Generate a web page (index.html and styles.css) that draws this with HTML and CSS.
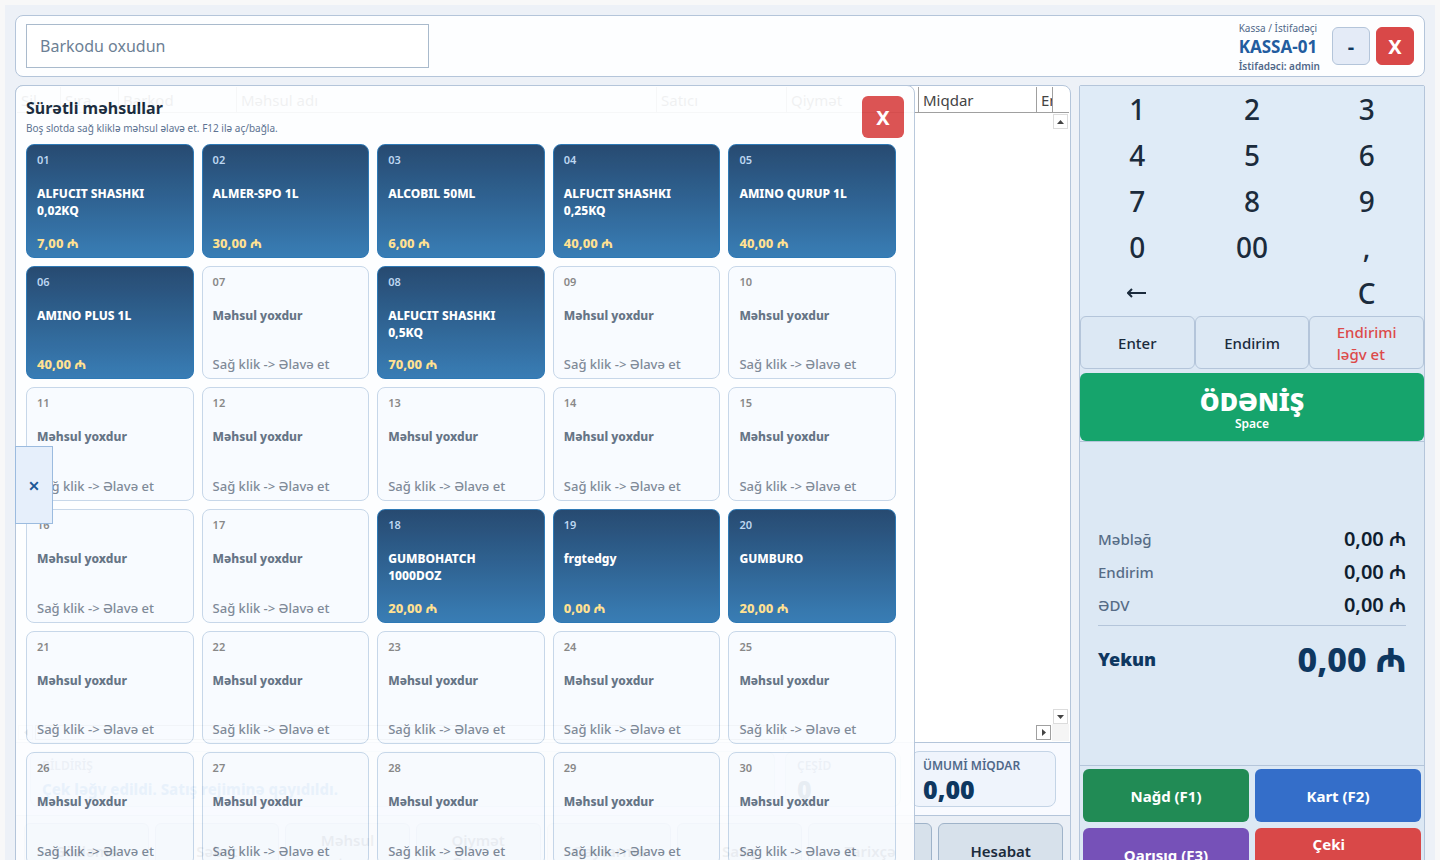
FILE: index.html
```html
<!DOCTYPE html>
<html lang="az">
<head>
    <meta charset="UTF-8">
    <meta name="viewport" content="width=device-width, initial-scale=1.0">
    <title>Kassa</title>
    <link rel="stylesheet" href="styles.css">
</head>
<body>
    <div class="app">
        <header class="topbar">
            <input type="text" class="barcode" placeholder="Barkodu oxudun" aria-label="Barkodu oxudun">
            <div class="cashier">
                <span class="cashier-label">Kassa / İstifadəçi</span>
                <strong class="cashier-name">KASSA-01</strong>
                <span class="cashier-user">İstifadəci: admin</span>
            </div>
            <button type="button" class="win-btn">-</button>
            <button type="button" class="win-btn win-close">X</button>
        </header>

        <main class="content">
            <section class="sales">
                <div class="sales-list">
                    <div class="table-wrap">
                        <table>
                            <colgroup>
                                <col class="c-del"><col class="c-no"><col class="c-code"><col class="c-name">
                                <col class="c-seller"><col class="c-price"><col class="c-qty"><col class="c-disc">
                            </colgroup>
                            <thead>
                                <tr>
                                    <th>Sil</th>
                                    <th>Sıra</th>
                                    <th>Barkod</th>
                                    <th>Məhsul adı</th>
                                    <th>Satıcı</th>
                                    <th>Qiymət</th>
                                    <th>Miqdar</th>
                                    <th>Endirim</th>
                                </tr>
                            </thead>
                            <tbody></tbody>
                        </table>
                    </div>
                    <div class="scroll-y">
                        <button type="button" class="arrow" aria-label="Yuxarı"><svg viewBox="0 0 7 4"><path d="M0 4L3.5 0L7 4Z"/></svg></button>
                        <button type="button" class="arrow" aria-label="Aşağı"><svg viewBox="0 0 7 4"><path d="M0 0L3.5 4L7 0Z"/></svg></button>
                    </div>
                    <div class="scroll-x">
                        <button type="button" class="arrow" aria-label="Sola"><svg class="side" viewBox="0 0 4 7"><path d="M4 0L0 3.5L4 7Z"/></svg></button>
                        <div class="track"><div class="thumb"></div></div>
                        <button type="button" class="arrow dark" aria-label="Sağa"><svg class="side" viewBox="0 0 4 7"><path d="M0 0L4 3.5L0 7Z"/></svg></button>
                    </div>
                    <div class="scroll-corner"></div>
                </div>

                <div class="stats">
                    <div class="stat">
                        <span class="stat-label">BİLDİRİŞ</span>
                        <span class="stat-note">Çek ləğv edildi. Satış rejiminə qayıdıldı.</span>
                    </div>
                    <div class="stat">
                        <span class="stat-label">ÇEŞİD</span>
                        <span class="stat-value">0</span>
                    </div>
                    <div class="stat">
                        <span class="stat-label">ÜMUMİ MİQDAR</span>
                        <span class="stat-value">0,00</span>
                    </div>
                </div>

                <nav class="actions">
                    <button type="button"><span>Gözləmə</span></button>
                    <button type="button"><span>Səbət</span></button>
                    <button type="button"><span>Məhsul<br>axtar</span></button>
                    <button type="button"><span>Qiymət<br>Öyrən</span></button>
                    <button type="button"><span>Qaytarma</span></button>
                    <button type="button"><span>Satış</span></button>
                    <button type="button"><span>Tarixçə</span></button>
                    <button type="button"><span>Hesabat</span></button>
                </nav>

                <div class="quick">
                    <div class="quick-head">
                        <div>
                            <h2>Sürətli məhsullar</h2>
                            <p>Boş slotda sağ kliklə məhsul əlavə et. F12 ilə aç/bağla.</p>
                        </div>
                        <button type="button" class="quick-close">X</button>
                    </div>
                    <div class="quick-grid" id="slots"></div>
                </div>
                <button type="button" class="quick-tab">×</button>
            </section>

            <aside class="side-panel">
                <div class="keypad">
                    <button type="button">1</button>
                    <button type="button">2</button>
                    <button type="button">3</button>
                    <button type="button">4</button>
                    <button type="button">5</button>
                    <button type="button">6</button>
                    <button type="button">7</button>
                    <button type="button">8</button>
                    <button type="button">9</button>
                    <button type="button">0</button>
                    <button type="button">00</button>
                    <button type="button">,</button>
                    <button type="button" class="key-back" aria-label="Geri">
                        <svg viewBox="0 0 20 10"><path d="M19 5H2M5 1L1 5L5 9"/></svg>
                    </button>
                    <button type="button" class="key-clear">C</button>
                </div>
                <div class="commands">
                    <button type="button">Enter</button>
                    <button type="button">Endirim</button>
                    <button type="button" class="cancel"><span>Endirimi<br>ləğv et</span></button>
                </div>
                <button type="button" class="pay">
                    <span class="pay-title">ÖDƏNİŞ</span>
                    <span class="pay-key">Space</span>
                </button>
                <dl class="totals">
                    <div><dt>Məbləğ</dt><dd>0,00 ₼</dd></div>
                    <div><dt>Endirim</dt><dd>0,00 ₼</dd></div>
                    <div><dt>ƏDV</dt><dd>0,00 ₼</dd></div>
                    <div class="grand"><dt>Yekun</dt><dd>0,00 ₼</dd></div>
                </dl>
                <div class="methods">
                    <button type="button" class="cash">Nağd (F1)</button>
                    <button type="button" class="card">Kart (F2)</button>
                    <button type="button" class="mixed">Qarışıq (F3)</button>
                    <button type="button" class="void"><span>Çeki<br>ləğv et</span></button>
                </div>
            </aside>
        </main>
    </div>

    <script>
        const slots = document.getElementById("slots");
        const products = {
            1: ["ALFUCIT SHASHKI 0,02KQ", "7,00 ₼"],
            2: ["ALMER-SPO 1L", "30,00 ₼"],
            3: ["ALCOBIL 50ML", "6,00 ₼"],
            4: ["ALFUCIT SHASHKI 0,25KQ", "40,00 ₼"],
            5: ["AMINO QURUP 1L", "40,00 ₼"],
            6: ["AMINO PLUS 1L", "40,00 ₼"],
            8: ["ALFUCIT SHASHKI 0,5KQ", "70,00 ₼"],
            18: ["GUMBOHATCH 1000DOZ", "20,00 ₼"],
            19: ["frgtedgy", "0,00 ₼"],
            20: ["GUMBURO", "20,00 ₼"]
        };

        for (let i = 1; i <= 30; i++) {
            const product = products[i];
            const [name, price] = product || ["Məhsul yoxdur", "Sağ klik -> Əlavə et"];
            const button = document.createElement("button");
            button.type = "button";
            button.className = product ? "slot filled" : "slot";
            [["slot-no", String(i).padStart(2, "0")], ["slot-name", name], ["slot-price", price]].forEach(([cls, text]) => {
                const span = document.createElement("span");
                span.className = cls;
                span.textContent = text;
                button.appendChild(span);
            });
            slots.appendChild(button);
        }
    </script>
</body>
</html>
```

FILE: styles.css
```css
* {
    box-sizing: border-box;
}

html,
body {
    height: 100%;
    overflow: hidden;
}

body {
    margin: 0;
    background-color: #f8f8f8;
    font-family: "Noto Sans", "Open Sans", sans-serif;
    color: #1b2b3c;
}

button,
input {
    font-family: inherit;
    color: inherit;
}

button {
    padding: 0;
    border: 0;
    background: none;
    cursor: pointer;
}

.app {
    display: flex;
    flex-direction: column;
    gap: 8px;
    height: calc(100vh + 40px);
    border: 5px solid #f8f8f8;
    padding: 10px;
    background-color: #edf1f7;
}

/* Top bar */
.topbar {
    display: flex;
    align-items: center;
    height: 62px;
    padding: 0 10px;
    border: 1px solid #b4c5da;
    border-radius: 8px;
    background-color: #fdfeff;
}

.barcode {
    width: 403px;
    height: 44px;
    padding: 0 13px;
    border: 1px solid #a9bacc;
    background-color: #fff;
    font-size: 16px;
}

.barcode::placeholder {
    color: #6c8094;
    opacity: 1;
}

.cashier {
    display: flex;
    flex-direction: column;
    margin-left: auto;
    margin-right: 12px;
    padding-top: 2px;
    font-size: 10px;
    line-height: 16px;
    color: #51698a;
}

.cashier-name {
    font-size: 17px;
    line-height: 22px;
    color: #225c9f;
}

.cashier-user {
    font-weight: 600;
}

.win-btn {
    width: 38px;
    height: 38px;
    border: 1px solid #b4c5da;
    border-radius: 6px;
    background-color: #e4ebf7;
    font-size: 20px;
    font-weight: 700;
    color: #12385f;
}

.win-close {
    margin-left: 6px;
    border-color: #d94848;
    background-color: #d94848;
    color: #fff;
}

/* Sales list */
.content {
    display: flex;
    flex: 1;
    gap: 8px;
    min-height: 0;
}

.sales {
    position: relative;
    display: flex;
    flex: 1;
    flex-direction: column;
    min-width: 0;
    border: 1px solid #b4c5da;
    border-radius: 8px;
    background-color: #fff;
}

.sales-list {
    display: grid;
    flex: 1;
    grid-template-columns: 1fr 17px;
    grid-template-rows: 1fr 17px;
    min-height: 0;
    padding: 1px;
    border-bottom: 1px solid #b4c5da;
}

.table-wrap {
    overflow: hidden;
}

table {
    width: 1120px;
    table-layout: fixed;
    border-collapse: separate;
    border-spacing: 0;
}

th {
    height: 26px;
    padding: 0 4px;
    border-right: 1px solid #a0a0a0;
    border-bottom: 1px solid #a0a0a0;
    font-size: 15px;
    font-weight: 400;
    line-height: 20px;
    text-align: left;
    color: #444;
}

.c-del { width: 44px; }
.c-no { width: 58px; }
.c-code { width: 118px; }
.c-name { width: 420px; }
.c-seller { width: 130px; }
.c-price { width: 132px; }
.c-qty { width: 118px; }
.c-disc { width: 100px; }

.scroll-y {
    display: flex;
    flex-direction: column;
    justify-content: space-between;
    padding: 0 1px;
    background: linear-gradient(#a0a0a0, #a0a0a0) 0 25px / 100% 1px no-repeat,
        linear-gradient(#a0a0a0, #a0a0a0) 0 0 / 1px 26px no-repeat;
}

.scroll-y .arrow:first-child {
    margin-top: 27px;
}

.scroll-x {
    display: flex;
    gap: 2px;
    padding: 1px;
}

.track {
    flex: 1;
}

.thumb {
    width: 75%;
    height: 15px;
    border: 1px solid #a0a0a0;
}

.arrow {
    display: flex;
    align-items: center;
    justify-content: center;
    width: 15px;
    height: 15px;
    border: 1px solid #dcdcdc;
    background-color: #fff;
}

.arrow.dark {
    border-color: #a0a0a0;
}

.arrow svg {
    width: 7px;
    height: 4px;
    fill: #444;
}

.arrow svg.side {
    width: 4px;
    height: 7px;
}

.scroll-corner {
    background-color: #f5f5f5;
}

/* Stats */
.stats {
    display: grid;
    grid-template-columns: 1fr 116px 145px;
    gap: 10px;
    padding: 8px 14px;
    border-bottom: 1px solid #b4c5da;
    background-color: #f8faff;
}

.stat {
    display: flex;
    flex-direction: column;
    height: 56px;
    padding: 4px 11px;
    border: 1px solid #c4d4e6;
    border-radius: 8px;
    background-color: #eff4fc;
}

.stat-label {
    font-size: 12px;
    font-weight: 600;
    line-height: 19px;
    color: #51698a;
}

.stat-note {
    font-size: 15px;
    font-weight: 800;
    line-height: 28px;
    color: #1b78c8;
}

.stat-value {
    font-size: 25px;
    font-weight: 900;
    line-height: 28px;
    color: #0e3760;
}

.actions {
    display: grid;
    grid-template-columns: repeat(8, 1fr);
    gap: 6px;
    padding: 7px 7px 5px 8px;
    border-radius: 0 0 8px 8px;
    background-color: #eaeff6;
}

.actions button {
    height: 56px;
    border: 1px solid #9fb3c9;
    border-radius: 6px;
    background-color: #d7e1eb;
    font-size: 15px;
    font-weight: 600;
    line-height: 22px;
}

.actions span,
.cancel span,
.void span {
    display: inline-block;
    text-align: left;
}

/* Quick products */
.quick {
    position: absolute;
    top: -1px;
    left: -1px;
    bottom: -1px;
    display: flex;
    flex-direction: column;
    width: calc(100% - 154px);
    padding: 10px;
    border: 1px solid #b4c5da;
    border-radius: 8px;
    background-color: #fdfeff;
    opacity: 0.93;
}

.quick-head {
    display: flex;
    justify-content: space-between;
    height: 48px;
}

.quick h2 {
    margin: 0;
    font-size: 16px;
    line-height: 24px;
    color: #0f1e33;
}

.quick p {
    margin: 0;
    font-size: 10px;
    line-height: 17px;
    color: #51698a;
}

.quick-close {
    width: 42px;
    height: 42px;
    border-radius: 6px;
    background-color: #d94848;
    font-size: 20px;
    font-weight: 700;
    color: #fff;
}

.quick-grid {
    display: grid;
    flex: 1;
    grid-template-columns: repeat(5, 1fr);
    grid-auto-rows: 1fr;
    gap: 8px;
    min-height: 0;
    padding: 0 8px 8px 0;
}

.slot {
    display: flex;
    flex-direction: column;
    min-height: 0;
    padding: 7px 10px 6px;
    border: 1px solid #c3d5e8;
    border-radius: 8px;
    background-color: #f8fbff;
    text-align: left;
    color: #768291;
}

.slot-no {
    font-size: 11px;
    font-weight: 600;
    line-height: 16px;
    color: #808080;
}

.slot-name {
    width: 130px;
    margin-top: 17px;
    font-size: 12px;
    font-weight: 800;
    line-height: 17px;
    color: #5b6b7d;
}

.slot-price {
    margin-top: auto;
    font-size: 13px;
    font-weight: 500;
    line-height: 16px;
}

.filled {
    border-color: #1f6fb0;
    background-image: linear-gradient(#173d67, #2a74b0);
}

.filled .slot-no {
    color: #b9d4f0;
}

.filled .slot-name {
    color: #fff;
}

.filled .slot-price {
    font-weight: 800;
    color: #ffdf8a;
}

.quick-tab {
    position: absolute;
    top: 360px;
    left: -1px;
    width: 38px;
    height: 78px;
    border: 1px solid #9bbbdf;
    background-color: #e6effb;
    font-size: 20px;
    font-weight: 600;
    color: #1c5796;
}

/* Right panel */
.side-panel {
    display: flex;
    flex-direction: column;
    width: 346px;
    border: 1px solid #b4c5da;
    border-radius: 2px;
    background-color: #dce8f4;
}

.keypad {
    display: grid;
    grid-template-columns: repeat(3, 1fr);
    grid-auto-rows: 46px;
    background-color: #dfebf7;
}

.keypad button {
    font-size: 28px;
    font-weight: 500;
    line-height: 46px;
}

.keypad .key-back {
    display: flex;
    align-items: center;
    justify-content: center;
}

.key-clear {
    grid-column: 3;
}

.key-back svg {
    width: 20px;
    height: 10px;
    fill: none;
    stroke: #1b2b3c;
    stroke-width: 2;
}

.commands {
    display: grid;
    grid-template-columns: repeat(3, 1fr);
    margin-bottom: 4px;
}

.commands button {
    height: 53px;
    border: 1px solid #b4c5da;
    border-radius: 6px;
    font-size: 15px;
    font-weight: 500;
    line-height: 22px;
}

.commands .cancel {
    color: #dc4a4a;
}

.pay {
    display: flex;
    flex-direction: column;
    align-items: center;
    justify-content: center;
    height: 68px;
    padding-top: 4px;
    border-radius: 6px;
    background-color: #16a46c;
    color: #fff;
}

.pay-title {
    font-size: 25px;
    font-weight: 900;
    line-height: 30px;
}

.pay-key {
    font-size: 12px;
    font-weight: 600;
    line-height: 16px;
}

.totals {
    display: flex;
    flex: 1;
    flex-direction: column;
    justify-content: center;
    margin: 0;
    padding: 6px 18px 0;
    border-top: 1px solid #b4c5da;
    border-bottom: 1px solid #b4c5da;
}

.totals div {
    display: flex;
    align-items: center;
    justify-content: space-between;
    height: 33px;
}

.totals dt {
    font-size: 15px;
    font-weight: 500;
    color: #566c86;
}

.totals dd {
    margin: 0;
    font-size: 20px;
    font-weight: 600;
    color: #0f1e30;
}

.totals .grand {
    height: 66px;
    margin-top: 4px;
    border-top: 1px solid #b4c5da;
}

.grand dt {
    font-size: 18px;
    font-weight: 900;
    color: #0e3760;
}

.grand dd {
    font-size: 34px;
    font-weight: 800;
    color: #0e3760;
}

.methods {
    display: grid;
    grid-template-columns: 1fr 1fr;
    gap: 6px;
    padding: 3px;
}

.methods button {
    height: 53px;
    border-radius: 6px;
    font-size: 15px;
    font-weight: 700;
    line-height: 22px;
    color: #fff;
}

.cash { background-color: #218b55; }
.card { background-color: #346ec9; }
.mixed { background-color: #7651b8; }
.void { background-color: #d94848; }
```
